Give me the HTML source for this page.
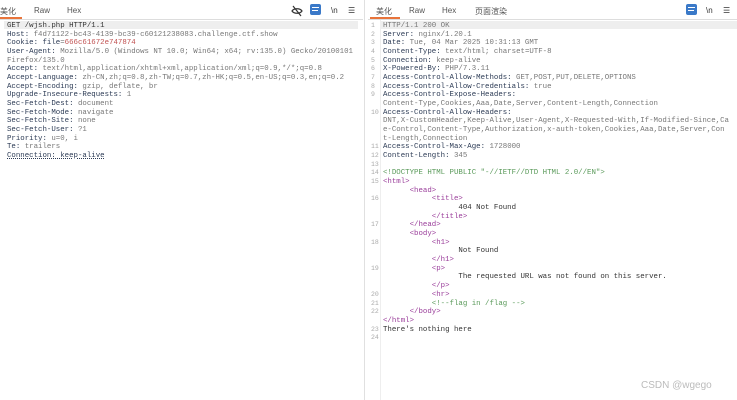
<!DOCTYPE html>
<html><head><meta charset="utf-8"><style>
body{margin:0;width:737px;height:400px;background:#fff;position:relative;overflow:hidden;font-family:"Liberation Sans","Noto Sans CJK SC",sans-serif}
.tab{position:absolute;top:6px;font-size:8px;color:#555}
.ul{position:absolute;top:17px;height:2px;background:#e8743b}
.hl{position:absolute;top:19px;height:1px;background:#ddd}
.code{position:absolute;font-family:"Liberation Mono",monospace;font-size:7.4px;color:#777}
.code div{height:8.68px;line-height:8.68px;white-space:pre;position:relative}
.code div i{position:absolute;left:-12px;font-style:normal;font-size:6.5px;color:#aaa}
.n{color:#2c3b55}
.r{color:#c05050}
.t{color:#9a3d9a}
.c{color:#5a9a5a}
.k{color:#333}
</style></head><body>
<span class="tab" style="left:0">美化</span>
<span class="tab" style="left:34px">Raw</span>
<span class="tab" style="left:67px">Hex</span>
<div class="ul" style="left:0;width:22px"></div>
<div class="hl" style="left:0;width:363px"></div>
<svg style="position:absolute;left:291px;top:5px" width="12" height="12" viewBox="0 0 12 12"><path d="M1 6c2-3 8-3 10 0c-2 3-8 3-10 0z M2 1l8 10" stroke="#333" fill="none" stroke-width="1.2"/></svg>
<div style="position:absolute;left:310px;top:4px;width:11px;height:11px;background:#3a79c8;border-radius:2px"><div style="position:absolute;left:2px;top:3px;width:7px;height:1px;background:#fff"></div><div style="position:absolute;left:2px;top:6px;width:6px;height:1px;background:#fff"></div></div>
<span class="tab" style="left:331px;color:#333">\n</span>
<span class="tab" style="left:348px;color:#333">☰</span>
<div style="position:absolute;left:364px;top:0;width:1px;height:400px;background:#e0e0e0"></div>
<div style="position:absolute;left:4px;top:21px;width:354px;height:8px;background:#eee"></div>
<div class="code" style="left:7px;top:22px">
<div><span class="k">GET /wjsh.php HTTP/1.1</span></div>
<div><span class="n">Host:</span> f4d71122-bc43-4139-bc39-c60121238083.challenge.ctf.show</div>
<div><span class="n">Cookie:</span> <span class="n">file</span>=<span class="r">666c61672e747874</span></div>
<div><span class="n">User-Agent:</span> Mozilla/5.0 (Windows NT 10.0; Win64; x64; rv:135.0) Gecko/20100101</div>
<div>Firefox/135.0</div>
<div><span class="n">Accept:</span> text/html,application/xhtml+xml,application/xml;q=0.9,*/*;q=0.8</div>
<div><span class="n">Accept-Language:</span> zh-CN,zh;q=0.8,zh-TW;q=0.7,zh-HK;q=0.5,en-US;q=0.3,en;q=0.2</div>
<div><span class="n">Accept-Encoding:</span> gzip, deflate, br</div>
<div><span class="n">Upgrade-Insecure-Requests:</span> 1</div>
<div><span class="n">Sec-Fetch-Dest:</span> document</div>
<div><span class="n">Sec-Fetch-Mode:</span> navigate</div>
<div><span class="n">Sec-Fetch-Site:</span> none</div>
<div><span class="n">Sec-Fetch-User:</span> ?1</div>
<div><span class="n">Priority:</span> u=0, i</div>
<div><span class="n">Te:</span> trailers</div>
<div><span class="n" style="text-decoration:underline dotted">Connection: keep-alive</span></div>
</div>

<span class="tab" style="left:376px">美化</span>
<span class="tab" style="left:409px">Raw</span>
<span class="tab" style="left:442px">Hex</span>
<span class="tab" style="left:475px">页面渲染</span>
<div class="ul" style="left:370px;width:30px"></div>
<div class="hl" style="left:368px;width:369px"></div>
<div style="position:absolute;left:686px;top:4px;width:11px;height:11px;background:#3a79c8;border-radius:2px"><div style="position:absolute;left:2px;top:3px;width:7px;height:1px;background:#fff"></div><div style="position:absolute;left:2px;top:6px;width:6px;height:1px;background:#fff"></div></div>
<span class="tab" style="left:706px;color:#333">\n</span>
<span class="tab" style="left:723px;color:#333">☰</span>
<div style="position:absolute;left:380px;top:20px;width:1px;height:380px;background:#eee"></div>
<div style="position:absolute;left:381px;top:21px;width:356px;height:8px;background:#eee"></div>
<div class="code" style="left:383px;top:22px">
<div><i>1</i>HTTP/1.1 200 OK</div>
<div><i>2</i><span class="n">Server:</span> nginx/1.20.1</div>
<div><i>3</i><span class="n">Date:</span> Tue, 04 Mar 2025 10:31:13 GMT</div>
<div><i>4</i><span class="n">Content-Type:</span> text/html; charset=UTF-8</div>
<div><i>5</i><span class="n">Connection:</span> keep-alive</div>
<div><i>6</i><span class="n">X-Powered-By:</span> PHP/7.3.11</div>
<div><i>7</i><span class="n">Access-Control-Allow-Methods:</span> GET,POST,PUT,DELETE,OPTIONS</div>
<div><i>8</i><span class="n">Access-Control-Allow-Credentials:</span> true</div>
<div><i>9</i><span class="n">Access-Control-Expose-Headers:</span></div>
<div>Content-Type,Cookies,Aaa,Date,Server,Content-Length,Connection</div>
<div><i>10</i><span class="n">Access-Control-Allow-Headers:</span></div>
<div>DNT,X-CustomHeader,Keep-Alive,User-Agent,X-Requested-With,If-Modified-Since,Ca</div>
<div>e-Control,Content-Type,Authorization,x-auth-token,Cookies,Aaa,Date,Server,Con</div>
<div>t-Length,Connection</div>
<div><i>11</i><span class="n">Access-Control-Max-Age:</span> 1728000</div>
<div><i>12</i><span class="n">Content-Length:</span> 345</div>
<div><i>13</i></div>
<div><i>14</i><span class="c">&lt;!DOCTYPE HTML PUBLIC "-//IETF//DTD HTML 2.0//EN"&gt;</span></div>
<div><i>15</i><span class="t">&lt;html&gt;</span></div>
<div>      <span class="t">&lt;head&gt;</span></div>
<div><i>16</i>           <span class="t">&lt;title&gt;</span></div>
<div class="k">                 404 Not Found</div>
<div>           <span class="t">&lt;/title&gt;</span></div>
<div><i>17</i>      <span class="t">&lt;/head&gt;</span></div>
<div>      <span class="t">&lt;body&gt;</span></div>
<div><i>18</i>           <span class="t">&lt;h1&gt;</span></div>
<div class="k">                 Not Found</div>
<div>           <span class="t">&lt;/h1&gt;</span></div>
<div><i>19</i>           <span class="t">&lt;p&gt;</span></div>
<div class="k">                 The requested URL was not found on this server.</div>
<div>           <span class="t">&lt;/p&gt;</span></div>
<div><i>20</i>           <span class="t">&lt;hr&gt;</span></div>
<div><i>21</i>           <span class="c">&lt;!--flag in /flag --&gt;</span></div>
<div><i>22</i>      <span class="t">&lt;/body&gt;</span></div>
<div><span class="t">&lt;/html&gt;</span></div>
<div class="k"><i>23</i>There's nothing here</div>
<div><i>24</i></div>
</div>
<div style="position:absolute;left:641px;top:380px;font-size:10px;color:#bbb">CSDN @wgego</div>
</body></html>
